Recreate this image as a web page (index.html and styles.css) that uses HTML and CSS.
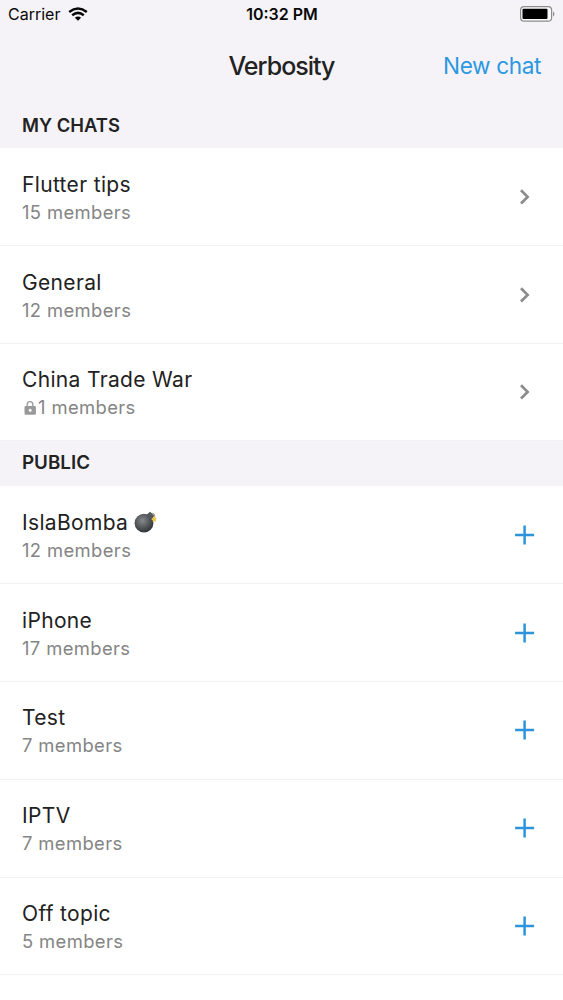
FILE: index.html
```html
<!DOCTYPE html>
<html lang="en">
<head>
<meta charset="utf-8">
<title>Verbosity</title>
<link rel="stylesheet" href="styles.css">
<script src="chats.js" defer></script>
</head>
<body>
<header class="top">
  <div class="status">
    <div class="carrier"><span class="carrier-name">Carrier</span>
      <svg class="wifi" viewBox="0 0 20 14"><path d="M10 13.7 L6.9 10.8 Q10 8.4 13.1 10.8Z"/><path class="arc" d="M4.2 8.2 Q10 3.5 15.8 8.2M1.2 4.9 Q10 -1.9 18.8 4.9"/></svg>
    </div>
    <span class="clock">10:32 PM</span>
    <svg class="battery" viewBox="0 0 36 16"><rect class="case" x=".6" y=".6" width="31" height="14.6" rx="3.5"/><rect x="2.5" y="2.7" width="25" height="10.3" rx="1"/><path class="tip" d="M33 5.5q3 2.5 0 5z"/></svg>
  </div>
  <div class="nav"><h1 class="title">Verbosity</h1><a class="new-chat">New chat</a></div>
</header>
<h2 class="section section-mine">MY CHATS</h2>
<ul class="list" id="mine"></ul>
<h2 class="section section-public">PUBLIC</h2>
<ul class="list list-public" id="public"></ul>
</body>
</html>
```
FILE: styles.css
```css
* { box-sizing: border-box; }
body { margin: 0; background: #fff; color: #222; font-family: Inter, sans-serif; height: 1000px; overflow: hidden; }
.top, .section { background: #f5f3f7; }
.top { height: 103px; }
.status { height: 28px; display: grid; grid-template-columns: 1fr auto 1fr; align-items: center; padding: 0 7px 0 8px; font-size: 16px; color: #080808; }
.carrier { display: flex; align-items: center; gap: 8px; }
.wifi { width: 20px; height: 14px; }
.wifi .arc { fill: none; stroke: #080808; stroke-width: 2.5; }
.clock { font-weight: 600; }
.battery { width: 36px; height: 16px; justify-self: end; }
.battery .case { fill: #fafafa; stroke: #8c8c8c; stroke-width: 1.2; }
.battery .tip { fill: #8c8c8c; }
.nav { height: 76px; display: grid; grid-template-columns: 1fr auto 1fr; align-items: center; padding: 0 22px; }
.title { grid-column: 2; margin: 0; font-size: 25px; font-weight: 500; letter-spacing: -.98px; }
.new-chat { justify-self: end; font-size: 22.6px; letter-spacing: -.38px; color: #2c98e0; padding-bottom: 2px; }
.section { margin: 0; height: 45px; padding: 0 0 2px 22px; display: flex; align-items: center; font-size: 18.4px; font-weight: 600; }
.section-public { font-size: 18.8px; }
.list { list-style: none; margin: 0; padding: 0; }
.row { height: 97.8px; display: flex; align-items: center; justify-content: space-between; padding: 1px 22px 0 22px; border-bottom: 1px solid #f1f1f2; }
.list-public .row { padding-top: 0; }
.name { font-size: 21px; line-height: 28px; letter-spacing: .34px; display: flex; align-items: center; gap: 6px; padding-top: 3px; }
.members { font-size: 18.4px; line-height: 27px; color: #858585; letter-spacing: .38px; display: flex; align-items: center; }
.action { width: 32px; height: 32px; fill: none; stroke-width: 2.5; }
.chevron { stroke: #8b8b8b; stroke-width: 2.7; }
.plus { stroke: #2c93dc; }
.lock { width: 16px; height: 16px; fill: #999; }
.bomb { width: 23px; height: 23px; }
```
FILE: chats.js
```js
const lock = '<svg class="lock" viewBox="0 0 16 16"><path fill-rule="evenodd" d="M3.5 6H4.5V4.5a3.5 3.5 0 0 1 7 0V6h1.2q1.2 0 1.2 1.2v6.4q0 1.2-1.2 1.2H3.7q-1.2 0-1.2-1.2V7.2Q2.5 6 3.5 6M5.8 6h4.4V4.5a2.2 2.2 0 0 0-4.4 0zM8.2 8.8a1.5 1.5 0 1 0 0 3 1.5 1.5 0 0 0 0-3z"/></svg>';
const bomb = '<svg class="bomb" viewBox="0 0 23 23"><defs><radialGradient id="iron" cx=".42" cy=".36" r=".65"><stop offset="0" stop-color="#85898c"/><stop offset=".5" stop-color="#5b5e61"/><stop offset="1" stop-color="#303336"/></radialGradient></defs><circle cx="10" cy="12.2" r="9.4" fill="url(#iron)"/><path fill="#55595c" d="M12.5 3.8L16 .8l4.5 3.8-2.6 3.8z"/><path fill="none" stroke="#a9a18c" stroke-width="1.4" d="M18.3 2.5q3 .6 2.2 4"/><path fill="#edc849" d="M20.3 4.8l.8 2 1.4.3-.8 1.8.4 1.8-1.8-.5-1.4.9-.3-1.9-1.5-1.2 1.8-.8z"/></svg>';
const icons = { chevron: 'M12 9.3l6.6 6.6-6.6 6.6', plus: 'M15.6 6.5v19M6.1 16h19' };
const row = (name, count, icon, nameIcon = '', memberIcon = '') =>
  `<li class="row"><div><div class="name">${name}${nameIcon}</div><div class="members">${memberIcon}${count} members</div></div><svg class="action ${icon}" viewBox="0 0 32 32"><path d="${icons[icon]}"/></svg></li>`;
document.getElementById('mine').innerHTML = row('Flutter tips', 15, 'chevron') + row('General', 12, 'chevron') + row('China Trade War', 1, 'chevron', '', lock);
document.getElementById('public').innerHTML = row('IslaBomba', 12, 'plus', bomb) + [['iPhone', 17], ['Test', 7], ['IPTV', 7], ['Off topic', 5]].map(c => row(c[0], c[1], 'plus')).join('');
```
